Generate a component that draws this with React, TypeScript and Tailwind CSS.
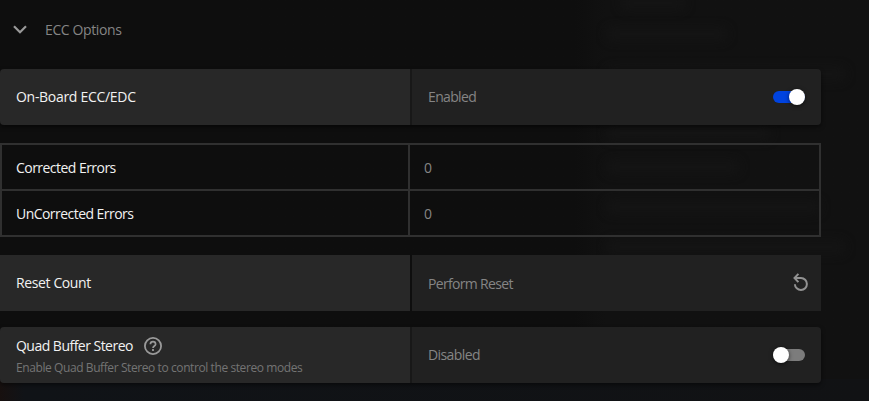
import type { ReactNode } from "react";

const smudges = [
  { left: 620, top: -4, width: 66 },
  { left: 606, top: 27, width: 122 },
  { left: 606, top: 67, width: 240 },
  { left: 606, top: 126, width: 165 },
  { left: 606, top: 160, width: 134 },
  { left: 606, top: 200, width: 215 },
  { left: 606, top: 240, width: 240 },
];

function Backdrop() {
  return (
    <div className="absolute inset-0 overflow-hidden bg-linear-to-r from-[#0e0e0e] from-[575px] to-[#111111] to-[605px]">
      {smudges.map((s) => (
        <div
          key={s.top}
          className="absolute h-3.5 rounded-full bg-[#141414] blur-[5px]"
          style={{ left: s.left, top: s.top, width: s.width }}
        />
      ))}
      <div className="absolute inset-x-0 bottom-0 h-[22px] bg-linear-to-r from-[#17100f] via-[#101317] via-[24px] to-[#111214]" />
    </div>
  );
}

function Toggle({ on }: { on: boolean }) {
  return (
    <span
      className={`flex h-3 w-8 items-center rounded-full ${on ? "justify-end bg-[#0043e0]" : "justify-start bg-[#7c7c7c]"}`}
    >
      <span className="size-4 rounded-full bg-white shadow-[0_1px_4px_rgba(0,0,0,0.6)]" />
    </span>
  );
}

function ResetIcon() {
  return (
    <svg className="size-5" viewBox="0 0 20 20" fill="none" stroke="#929292" strokeWidth="2">
      <path d="M6.4 1.9 2.5 6l3.9 4.1" />
      <path d="M3 6h6a6 6 0 1 1-6.1 6.2" />
    </svg>
  );
}

function HelpIcon() {
  return (
    <svg className="size-[18px]" viewBox="0 0 18 18" fill="none" stroke="#999999">
      <circle cx="9" cy="9" r="8.1" strokeWidth="1.8" />
      <path d="M6.4 7.2a2.6 2.6 0 1 1 5.2 0c0 1.7-2.6 1.9-2.6 3.8" strokeWidth="1.7" />
      <path d="M9 12v1.9" strokeWidth="1.8" />
    </svg>
  );
}

function Row({
  label,
  value,
  control,
  className,
  divider,
}: {
  label: ReactNode;
  value: ReactNode;
  control: ReactNode;
  className: string;
  divider: string;
}) {
  return (
    <div className={`flex h-14 w-[821px] overflow-hidden ${className}`}>
      <div className="flex w-[410px] flex-col justify-center bg-[#282828] px-4">{label}</div>
      <div className={`w-0.5 ${divider}`} />
      <div className="flex flex-1 items-center justify-between bg-[#212121] px-4 text-[#858585]">
        {value}
        {control}
      </div>
    </div>
  );
}

function ErrorRow({ label }: { label: string }) {
  return (
    <div className="flex h-11 divide-x-2 divide-[#303030]">
      <div className="flex w-[408px] items-center pt-0.5 pl-3.5 tracking-[-0.54px]">{label}</div>
      <div className="flex items-center pt-0.5 pl-3.5 text-[#858585]">0</div>
    </div>
  );
}

export default function App() {
  return (
    <div className="relative h-[401px] w-full overflow-hidden font-['Open_Sans','Noto_Sans',sans-serif] text-[14px] leading-5 text-[#f2f2f2]">
      <Backdrop />
      <main className="relative">
        <header className="flex h-[69px] items-start gap-[18px] pt-5 pl-[13px] text-[#858585]">
          <svg className="mt-[5px] h-[9px] w-3.5" viewBox="0 0 14 9" fill="none" stroke="#999999" strokeWidth="2.2">
            <path d="M1 1.2 7 7.2l6-6" />
          </svg>
          <span className="tracking-[-0.38px]">ECC Options</span>
        </header>
        <Row
          className="rounded shadow-[0_2px_4px_rgba(0,0,0,0.5)]"
          divider="bg-[#181818]"
          label={<span className="tracking-[-0.3px]">On-Board ECC/EDC</span>}
          value={<span className="tracking-[-0.65px]">Enabled</span>}
          control={<Toggle on />}
        />
        <div className="mt-[18px] w-[821px] border-2 border-[#303030]">
          <ErrorRow label="Corrected Errors" />
          <div className="h-0.5 bg-[#303030]" />
          <ErrorRow label="UnCorrected Errors" />
        </div>
        <Row
          className="mt-[18px]"
          divider="bg-[#0e0e0e]"
          label={<span className="tracking-[-0.38px]">Reset Count</span>}
          value={<span className="pt-0.5 tracking-[-0.67px]">Perform Reset</span>}
          control={
            <span className="-mr-[7px] pb-0.5">
              <ResetIcon />
            </span>
          }
        />
        <Row
          className="mt-4 rounded shadow-[0_2px_4px_rgba(0,0,0,0.5)]"
          divider="bg-[#181818]"
          label={
            <div className="flex flex-col gap-1 pt-0.5">
              <span className="flex items-center gap-[11px]">
                <span className="tracking-[-0.52px]">Quad Buffer Stereo</span>
                <HelpIcon />
              </span>
              <span className="text-[12px] leading-4 tracking-[-0.41px] text-[#747474]">
                Enable Quad Buffer Stereo to control the stereo modes
              </span>
            </div>
          }
          value={<span className="tracking-[-0.58px]">Disabled</span>}
          control={<Toggle on={false} />}
        />
      </main>
    </div>
  );
}
